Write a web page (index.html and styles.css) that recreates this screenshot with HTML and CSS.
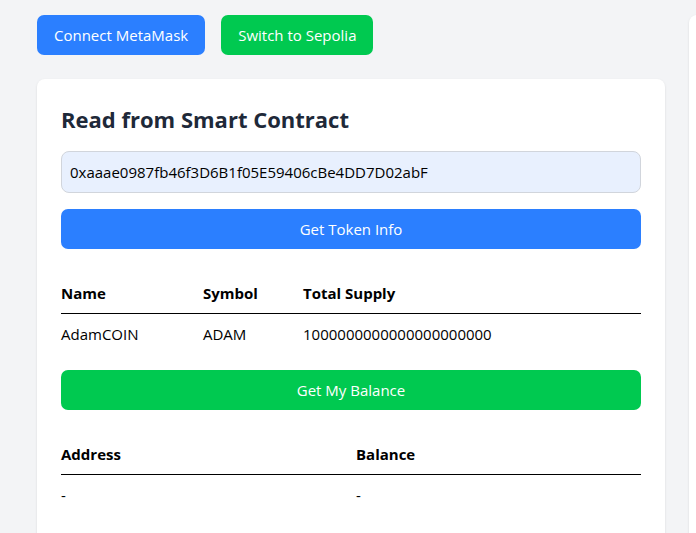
FILE: index.html
```html
<!DOCTYPE html>
<html>
<head>
<meta charset="utf-8">
<link rel="stylesheet" href="styles.css">
</head>
<body>
<div class="page">
  <div class="main-col">
    <div class="actions">
      <button class="btn btn-blue">Connect MetaMask</button>
      <button class="btn btn-green">Switch to Sepolia</button>
    </div>
    <div class="card">
      <h2 class="card-title">Read from Smart Contract</h2>
      <input class="addr-input" type="text" value="0xaaae0987fb46f3D6B1f05E59406cBe4DD7D02abF">
      <button class="btn btn-blue btn-block btn-get-info">Get Token Info</button>
      <table class="data-table table-info">
        <thead>
          <tr><th class="col-name">Name</th><th class="col-symbol">Symbol</th><th>Total Supply</th></tr>
        </thead>
        <tbody>
          <tr><td>AdamCOIN</td><td>ADAM</td><td>1000000000000000000000</td></tr>
        </tbody>
      </table>
      <button class="btn btn-green btn-block btn-balance">Get My Balance</button>
      <table class="data-table table-balance">
        <thead>
          <tr><th class="col-address">Address</th><th>Balance</th></tr>
        </thead>
        <tbody>
          <tr><td>-</td><td>-</td></tr>
        </tbody>
      </table>
    </div>
  </div>
  <div class="side-col">
    <div class="card side-card"></div>
  </div>
</div>
</body>
</html>
```
FILE: styles.css
```css
* { box-sizing: border-box; }
html, body {
  margin: 0;
  padding: 0;
  background: #f3f4f6;
  font-family: "Open Sans", "Noto Sans", sans-serif;
  font-size: 15px;
  line-height: 24px;
  color: #000;
}
.page {
  display: flex;
  gap: 24px;
  padding: 15px 0 0 37px;
  width: 100vw;
  height: 100vh;
  overflow: hidden;
}
.main-col {
  flex: 0 0 628px;
  display: flex;
  flex-direction: column;
  gap: 24px;
}
.side-col {
  flex: 0 0 628px;
}
.actions {
  display: flex;
  gap: 16px;
}
.btn {
  border: none;
  border-radius: 7px;
  height: 40px;
  padding: 0 17px;
  font-family: inherit;
  font-size: 15px;
  color: #fff;
  cursor: pointer;
}
.btn-blue { background: #2b7fff; }
.btn-green { background: #00c950; }
.btn-block { width: 100%; display: block; }
.card {
  background: #fff;
  border-radius: 8px;
  box-shadow: 0 1px 3px rgba(0,0,0,0.08), 0 1px 2px rgba(0,0,0,0.04);
  padding: 24px 24px 60px;
}
.side-card {
  height: 600px;
}
.card-title {
  margin: 0 0 16px;
  font-size: 22px;
  line-height: 32px;
  font-weight: 700;
  color: #1e2939;
}
.addr-input {
  display: block;
  width: 100%;
  height: 42px;
  padding: 0 8px;
  border: 1px solid #d1d5dc;
  border-radius: 8px;
  background: #e8f0fe;
  font-family: inherit;
  font-size: 15px;
  color: #000;
  outline: none;
}
.btn-get-info { margin-top: 16px; }
.data-table {
  width: 100%;
  border-collapse: collapse;
  text-align: left;
  margin-top: 26px;
}
.data-table th {
  font-weight: 700;
  padding: 7px 0 9px;
  line-height: 22px;
  border-bottom: 1px solid #000;
}
.data-table td {
  padding: 8px 0 10px;
  line-height: 24px;
}
.col-name { width: 142px; }
.col-symbol { width: 100px; }
.col-address { width: 295px; }
.btn-balance { margin-top: 14px; }
```
